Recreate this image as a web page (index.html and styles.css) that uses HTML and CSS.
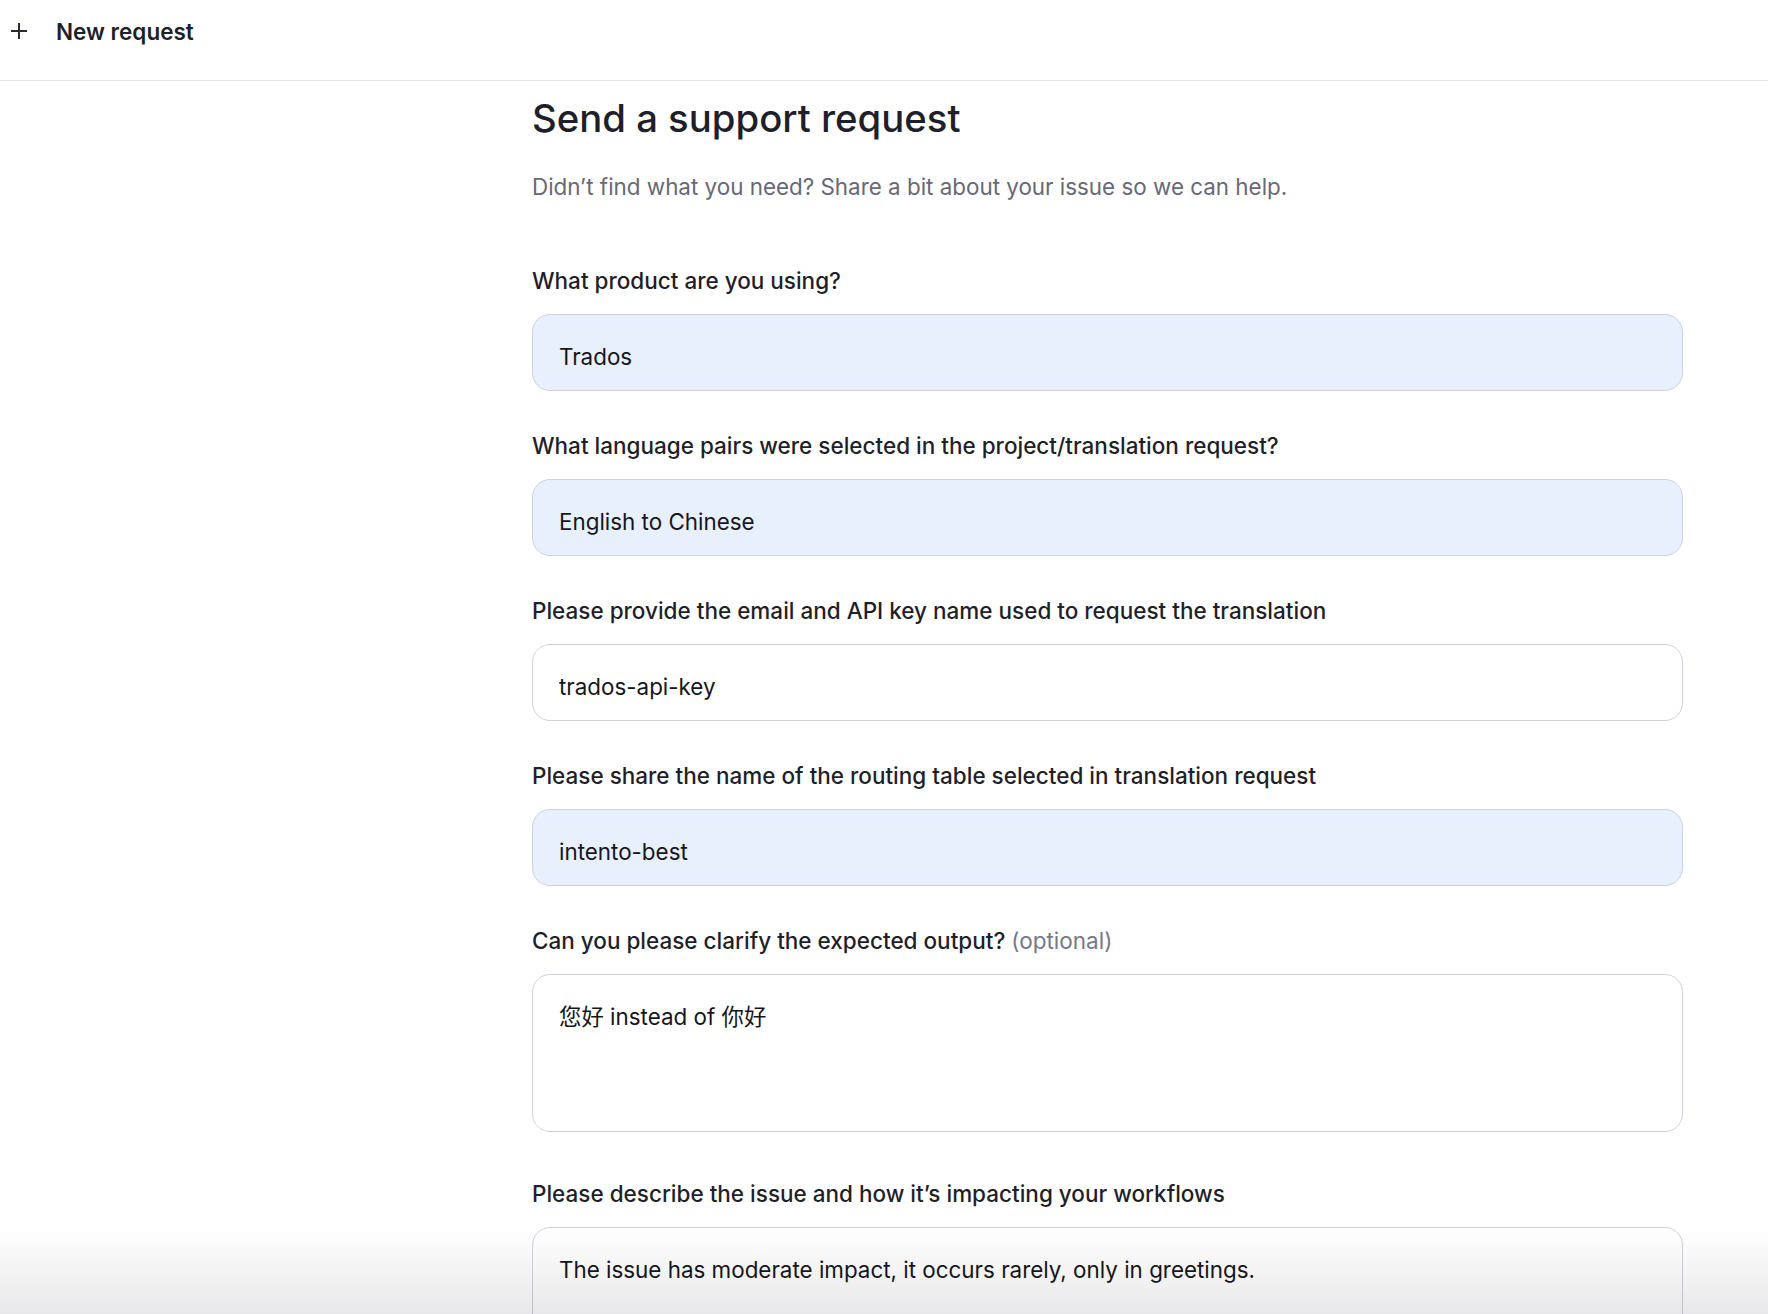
FILE: index.html
```html
<!DOCTYPE html>
<html lang="en">
<head>
  <meta charset="UTF-8" />
  <meta name="viewport" content="width=device-width, initial-scale=1.0"/>
  <title>Send a support request</title>
  <link rel="stylesheet" href="styles.css">
</head>
<body>
  <header class="topbar">
    <a href="#" class="new-request">
      <svg class="plus" width="18" height="18" viewBox="0 0 18 18" aria-hidden="true">
        <path d="M9 1v16M1 9h16" stroke="#2a2a33" stroke-width="2" fill="none"/>
      </svg>
      <span>New request</span>
    </a>
  </header>

  <div class="layout">
    <aside class="sidebar"></aside>

    <main class="request">
      <h1 class="title">Send a support request</h1>
      <p class="subtitle">Didn’t find what you need? Share a bit about your issue so we can help.</p>

      <form class="request-form">
        <div class="field">
          <label for="product">What product are you using?</label>
          <input type="text" id="product" class="input filled" value="Trados">
        </div>

        <div class="field">
          <label for="pairs">What language pairs were selected in the project/translation request?</label>
          <input type="text" id="pairs" class="input filled" value="English to Chinese">
        </div>

        <div class="field">
          <label for="apikey">Please provide the email and API key name used to request the translation</label>
          <input type="text" id="apikey" class="input" value="trados-api-key">
        </div>

        <div class="field">
          <label for="routing">Please share the name of the routing table selected in translation request</label>
          <input type="text" id="routing" class="input filled" value="intento-best">
        </div>

        <div class="field field-area">
          <label for="output">Can you please clarify the expected output? <span class="optional">(optional)</span></label>
          <textarea id="output" class="input area">您好 instead of 你好</textarea>
        </div>

        <div class="field field-area">
          <label for="impact">Please describe the issue and how it’s impacting your workflows</label>
          <textarea id="impact" class="input area">The issue has moderate impact, it occurs rarely, only in greetings.</textarea>
        </div>
      </form>
    </main>
  </div>

  <div class="bottom-fade"></div>
</body>
</html>
```

FILE: styles.css
```css
body {
  font-family: Inter, "Noto Sans", "Noto Sans CJK SC", sans-serif;
  margin: 0;
  padding: 0;
  background: #ffffff;
  color: #1f1f29;
}
.topbar {
  height: 80px;
  border-bottom: 1px solid #e6e6e9;
  box-sizing: content-box;
}
.new-request {
  display: flex;
  align-items: center;
  height: 62px;
  padding-left: 10px;
  color: #1f1f29;
  text-decoration: none;
  font-size: 22.5px;
  font-weight: 600;
}
.plus {
  flex: none;
  margin-right: 28px;
}
.layout {
  display: grid;
  grid-template-columns: 532px 1151px;
}
.request {
  padding-top: 15px;
}
.title {
  margin: 0;
  font-size: 38.3px;
  line-height: 44px;
  font-weight: 500;
}
.subtitle {
  margin: 32px 0 0;
  font-size: 22.4px;
  line-height: 30px;
  color: #686876;
}
.request-form {
  margin-top: 64px;
}
.field {
  margin-bottom: 40px;
}
.field-area {
  margin-bottom: 46.5px;
}
.field label {
  display: block;
  font-size: 22.5px;
  line-height: 30px;
  font-weight: 500;
  margin-bottom: 18px;
  color: #1f1f29;
}
.optional {
  font-weight: 400;
  color: #77778a;
}
.input {
  display: block;
  width: 100%;
  box-sizing: border-box;
  height: 77px;
  padding: 8px 26px 0;
  border: 1px solid #cfd1dd;
  border-radius: 18px;
  background: #ffffff;
  font-family: inherit;
  font-size: 22.4px;
  color: #16161d;
  outline: none;
}
.input.filled {
  background: #e8effd;
}
.area {
  height: 158px;
  padding-top: 27px;
  line-height: 30px;
  resize: none;
  font-family: Inter, "Noto Sans CJK SC", sans-serif;
}
.bottom-fade {
  position: fixed;
  left: 0;
  right: 0;
  bottom: 0;
  height: 86px;
  background: linear-gradient(to bottom, #ffffff, #e8e8ea);
  mix-blend-mode: multiply;
  pointer-events: none;
}
```
